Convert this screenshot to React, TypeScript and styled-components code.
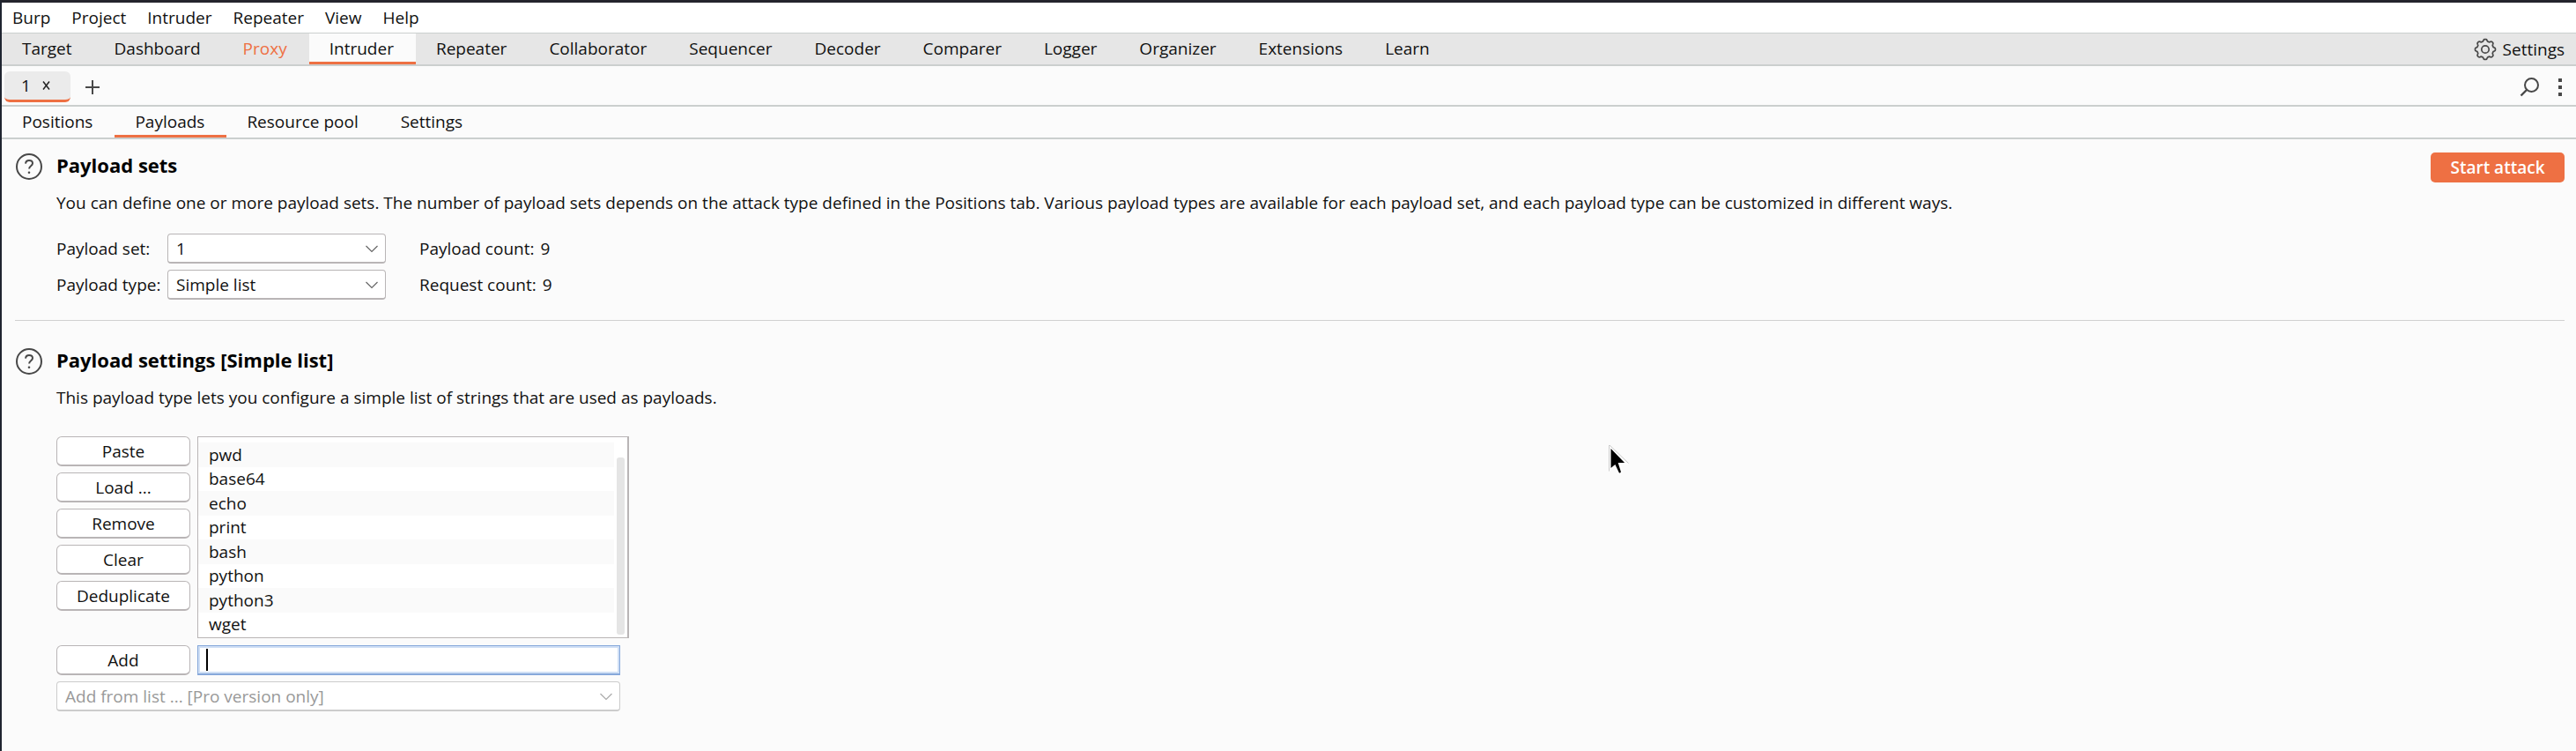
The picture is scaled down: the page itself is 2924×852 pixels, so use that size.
import React from "react";
import styled, { createGlobalStyle, css } from "styled-components";

const accent = "#ee7043";
const line = "#cbcfce";
const edge = "#b9b5b6";

const GlobalStyle = createGlobalStyle`
  * { box-sizing: border-box; }
  body {
    margin: 0;
    background: #fbfbfb;
    color: #111;
    font: 19px/26px "Open Sans", "Noto Sans", sans-serif;
  }
  button, input, select { font: inherit; color: inherit; }
  h2, p, ul { margin: 0; padding: 0; }
`;

const Window = styled.div`
  min-height: 100vh;
  border-top: 3px solid #24252d;
  border-left: 2px solid #1f2430;
  background: #fbfbfb;
`;

const MenuBar = styled.nav`
  display: flex;
  gap: 24px;
  height: 34px;
  padding: 0 12px;
  align-items: center;
  background: #fff;
`;

const PlainButton = styled.button`
  display: flex;
  align-items: center;
  padding: 0;
  border: 0;
  background: none;
  white-space: nowrap;
`;

const TabBar = styled.nav<{ $main?: boolean }>`
  display: flex;
  height: ${(p) => (p.$main ? 38 : 37)}px;
  border-bottom: 2px solid ${line};
  ${(p) =>
    p.$main &&
    css`
      border-top: 1px solid ${line};
      background: #e6e6e6;
    `}
`;

const Tab = styled(PlainButton)<{ $active?: boolean; $hot?: boolean }>`
  padding: 1px 25px 0 23px;
  border-bottom: 3px solid ${(p) => (p.$active ? accent : "transparent")};
  background: ${(p) => (p.$active ? "#fbfbfb" : "none")};
  color: ${(p) => (p.$hot ? accent : "inherit")};
`;

const SettingsButton = styled(PlainButton)`
  gap: 7px;
  margin-left: auto;
  padding-right: 13px;
`;

const AttackBar = styled.div`
  display: flex;
  align-items: center;
  height: 46px;
  padding: 3px 15px 0 3px;
  border-bottom: 2px solid ${line};
`;

const AttackTab = styled.div`
  display: flex;
  align-items: center;
  gap: 12px;
  width: 75px;
  height: 35px;
  padding-left: 19px;
  border-radius: 6px;
  border-bottom: 3px solid ${accent};
  background: #ebebeb;
`;

const NewTab = styled(PlainButton)`
  margin: 0 auto 0 17px;
`;

const ToolIcons = styled.div`
  display: flex;
  gap: 20px;
`;

const Content = styled.main`
  padding: 15px 13px 40px 15px;
`;

const Section = styled.section<{ $ruled?: boolean }>`
  display: flex;
  align-items: flex-start;
  gap: 16px;
  ${(p) =>
    p.$ruled &&
    css`
      padding-bottom: 23px;
      margin-bottom: 30px;
      border-bottom: 1px solid #d0d0d0;
    `}
`;

const HelpButton = styled(PlainButton)`
  width: 31px;
  height: 32px;
`;

const Body = styled.div`
  flex: 1;
`;

const Title = styled.h2`
  font-size: 22px;
  line-height: 28px;
  font-weight: 700;
  color: #000;
`;

const Note = styled.p`
  margin-top: 16px;
`;

const StartButton = styled.button`
  height: 34px;
  width: 152px;
  padding: 0;
  border: 0;
  border-radius: 5px;
  background: ${accent};
  color: #fff;
  font-weight: 600;
`;

const Fields = styled.div`
  display: grid;
  grid-template-columns: 118px 248px auto auto;
  column-gap: 8px;
  row-gap: 7px;
  align-items: center;
  justify-content: start;
  margin-top: 22px;
`;

const FieldLabel = styled.label`
  white-space: nowrap;
`;

const Count = styled.output`
  display: flex;
  grid-column: span 2;
  gap: 7px;
  padding-left: 30px;
`;

const SelectBox = styled.div<{ $wide?: boolean }>`
  position: relative;
  width: ${(p) => (p.$wide ? "640px" : "auto")};
  svg {
    position: absolute;
    right: 8px;
    top: 13px;
    pointer-events: none;
  }
`;

const Select = styled.select`
  appearance: none;
  display: block;
  width: 100%;
  height: 34px;
  padding: 0 32px 0 9px;
  border: 1px solid ${edge};
  border-bottom-width: 2px;
  border-radius: 4px;
  background: #fff;
  &:disabled {
    border-color: #ccc;
    color: #999;
    opacity: 1;
  }
`;

const Editor = styled.div`
  display: grid;
  grid-template-columns: 152px 480px;
  gap: 8px;
  margin-top: 31px;
`;

const Buttons = styled.div`
  display: flex;
  flex-direction: column;
  gap: 7px;
`;

const Action = styled.button`
  width: 152px;
  height: 34px;
  padding: 0;
  border: 1px solid ${edge};
  border-bottom-width: 2px;
  border-radius: 6px;
  background: #fff;
`;

const ListRow = styled.div`
  display: flex;
  align-items: center;
  gap: 3px;
`;

const ListBox = styled.div`
  display: flex;
  flex: none;
  gap: 3px;
  width: 490px;
  height: 229px;
  padding: 6px 3px 1px 0;
  border: 1px solid ${edge};
  border-right-width: 2px;
  background: #fff;
`;

const List = styled.ul`
  display: flex;
  flex: 1;
  flex-direction: column;
  list-style: none;
`;

const Item = styled.li`
  display: flex;
  flex: 1;
  align-items: center;
  padding-left: 12px;
  &:nth-child(odd) {
    background: #fafafa;
  }
`;

const Thumb = styled.div`
  width: 9px;
  margin: 17px 0 2px;
  border-radius: 3px;
  background: #e5e5e5;
`;

const EntryBox = styled.div`
  position: relative;
`;

const Entry = styled.input`
  display: block;
  width: 100%;
  height: 34px;
  padding: 0 8px;
  border: 1px solid #86a8da;
  border-bottom-width: 2px;
  box-shadow: inset 0 0 0 2px #cfdff5;
  outline: none;
  caret-color: transparent;
`;

const Caret = styled.span`
  position: absolute;
  left: 10px;
  top: 4px;
  width: 2px;
  height: 25px;
  background: #000;
`;

const ProRow = styled.div`
  margin-top: 7px;
`;

const Pointer = styled.svg`
  position: absolute;
  left: 1826px;
  top: 505px;
`;

const Chevron = ({ color = "#666" }: { color?: string }) => (
  <svg width="16" height="9" viewBox="0 0 16 9" fill="none" stroke={color} strokeWidth="1.2">
    <path d="M1.5 1 8 7.5 14.5 1" />
  </svg>
);

const HelpIcon = () => (
  <svg width="31" height="32" viewBox="0 0 31 32" fill="none" stroke="#484848" strokeWidth="2">
    <circle cx="16" cy="16" r="14" />
    <path d="M12 12.6c.3-2.4 1.9-3.6 4-3.6 2.3 0 4 1.3 4 3.3 0 3-3.9 2.9-3.9 6.200" />
    <circle cx="16" cy="22.8" r="1.3" fill="#484848" stroke="none" />
  </svg>
);

const gearPath = (() => {
  const pts: string[] = [];
  for (let i = 0; i < 96; i++) {
    const a = (i / 96) * Math.PI * 2;
    const r = 10.4 + 1.1 * Math.tanh(2.2 * Math.cos(8 * a));
    pts.push(`${(13 + r * Math.sin(a)).toFixed(2)} ${(13 - r * Math.cos(a)).toFixed(2)}`);
  }
  return `M${pts.join("L")}Z`;
})();

const GearIcon = () => (
  <svg width="26" height="26" viewBox="0 0 26 26" fill="none" stroke="#484848" strokeWidth="1.7">
    <path d={gearPath} />
    <circle cx="13" cy="13" r="4.2" />
  </svg>
);

const menus = ["Burp", "Project", "Intruder", "Repeater", "View", "Help"];
const tools = [
  "Target", "Dashboard", "Proxy", "Intruder", "Repeater", "Collaborator", "Sequencer",
  "Decoder", "Comparer", "Logger", "Organizer", "Extensions", "Learn",
];
const panes = ["Positions", "Payloads", "Resource pool", "Settings"];
const actions = ["Paste", "Load ...", "Remove", "Clear", "Deduplicate"];
const payloads = ["pwd", "base64", "echo", "print", "bash", "python", "python3", "wget"];

export default function App() {
  return (
    <Window>
      <GlobalStyle />
      <MenuBar>
        {menus.map((m) => (
          <PlainButton key={m}>{m}</PlainButton>
        ))}
      </MenuBar>
      <TabBar $main>
        {tools.map((t) => (
          <Tab key={t} $active={t === "Intruder"} $hot={t === "Proxy"}>
            {t}
          </Tab>
        ))}
        <SettingsButton>
          <GearIcon />
          Settings
        </SettingsButton>
      </TabBar>
      <AttackBar>
        <AttackTab>
          <span>1</span>
          <PlainButton aria-label="Close tab">
            <svg width="12" height="12" viewBox="0 0 12 12" stroke="#222" strokeWidth="1.5">
              <path d="M2 1.5l7 9M9 1.5l-7 9" />
            </svg>
          </PlainButton>
        </AttackTab>
        <NewTab aria-label="New tab">
          <svg width="16" height="18" viewBox="0 0 16 18" stroke="#484848" strokeWidth="2">
            <path d="M0 9h16M8 1v16" />
          </svg>
        </NewTab>
        <ToolIcons>
          <PlainButton aria-label="Search">
            <svg width="24" height="24" viewBox="0 0 24 24" fill="none" stroke="#484848" strokeWidth="2">
              <circle cx="14.5" cy="9.5" r="7.5" />
              <path d="M9 15l-6.5 6.5" strokeWidth="2.4" />
            </svg>
          </PlainButton>
          <PlainButton aria-label="More options">
            <svg width="6" height="24" viewBox="0 0 6 24" fill="#484848">
              <path d="M1 2h4v4H1zM1 10h4v4H1zM1 18h4v4H1z" />
            </svg>
          </PlainButton>
        </ToolIcons>
      </AttackBar>
      <TabBar>
        {panes.map((t) => (
          <Tab key={t} $active={t === "Payloads"}>
            {t}
          </Tab>
        ))}
      </TabBar>
      <Content>
        <Section $ruled>
          <HelpButton aria-label="Help on payload sets">
            <HelpIcon />
          </HelpButton>
          <Body>
            <Title>Payload sets</Title>
            <Note>
              You can define one or more payload sets. The number of payload sets depends on the attack type
              defined in the Positions tab. Various payload types are available for each payload set, and each
              payload type can be customized in different ways.
            </Note>
            <Fields>
              <FieldLabel htmlFor="set">Payload set:</FieldLabel>
              <SelectBox>
                <Select id="set">
                  <option>1</option>
                </Select>
                <Chevron />
              </SelectBox>
              <Count>
                <span>Payload count:</span>
                <span>9</span>
              </Count>
              <FieldLabel htmlFor="type">Payload type:</FieldLabel>
              <SelectBox>
                <Select id="type">
                  <option>Simple list</option>
                </Select>
                <Chevron />
              </SelectBox>
              <Count>
                <span>Request count:</span>
                <span>9</span>
              </Count>
            </Fields>
          </Body>
          <StartButton>Start attack</StartButton>
        </Section>
        <Section>
          <HelpButton aria-label="Help on payload settings">
            <HelpIcon />
          </HelpButton>
          <Body>
            <Title>Payload settings [Simple list]</Title>
            <Note>This payload type lets you configure a simple list of strings that are used as payloads.</Note>
            <Editor>
              <Buttons>
                {actions.map((a) => (
                  <Action key={a}>{a}</Action>
                ))}
              </Buttons>
              <ListRow>
                <ListBox>
                  <List>
                    {payloads.map((p) => (
                      <Item key={p}>{p}</Item>
                    ))}
                  </List>
                  <Thumb />
                </ListBox>
                <svg width="12" height="14" viewBox="0 0 12 14">
                  <path d="M0 0h3l9 6v2l-9 6H0z" />
                </svg>
              </ListRow>
              <Action>Add</Action>
              <EntryBox>
                <Entry type="text" aria-label="New payload" />
                <Caret />
              </EntryBox>
            </Editor>
            <ProRow>
              <SelectBox $wide>
                <Select disabled aria-label="Add from list">
                  <option>Add from list ... [Pro version only]</option>
                </Select>
                <Chevron color="#aaa" />
              </SelectBox>
            </ProRow>
          </Body>
        </Section>
      </Content>
      <Pointer width="24" height="36" viewBox="0 0 24 36">
        <path
          d="M1.5 1.5V28l5.5-4.5 4 8.5q2.5 1.5 4-1.5l-3-9.5h8.500z"
          fill="#000"
          stroke="#fff"
          strokeWidth="2"
        />
        <path d="M.5 0V29.5M1 0l21.500 20.500" stroke="#aaa" strokeWidth="1" opacity=".6" />
      </Pointer>
    </Window>
  );
}
